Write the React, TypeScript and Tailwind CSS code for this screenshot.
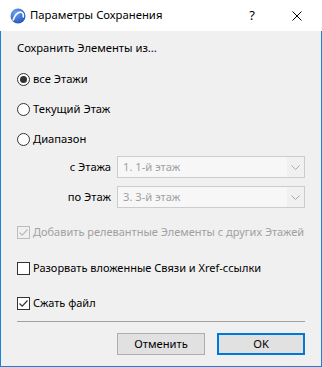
import React from "react";

const font = { fontFamily: '"Segoe UI", "Noto Sans", sans-serif' };

function Radio({ checked, label }: { checked?: boolean; label: string }) {
  return (
    <div className="flex h-5 items-center">
      <span className="flex h-[13px] w-[13px] items-center justify-center rounded-full border border-[#333333] bg-white">
        {checked && <span className="h-[7px] w-[7px] rounded-full bg-[#333333]" />}
      </span>
      <span className="ml-[3px] whitespace-nowrap text-[11.2px] text-black">{label}</span>
    </div>
  );
}

function Check({ checked, disabled, label }: { checked?: boolean; disabled?: boolean; label: string }) {
  const c = disabled ? "#bcbcbc" : "#333333";
  return (
    <div className="flex h-5 items-center">
      <span
        className={
          "flex h-[13px] w-[13px] shrink-0 items-center justify-center border " +
          (disabled ? "border-[#bcbcbc] bg-[#f0f0f0]" : "border-[#333333] bg-white")
        }
      >
        {checked && (
          <svg width="11" height="11" viewBox="0 0 11 11">
            <path d="M1.5 5.5 L4.2 8.2 L9.5 2.5" fill="none" stroke={c} strokeWidth="1.2" />
          </svg>
        )}
      </span>
      <span className={"ml-[3px] whitespace-nowrap text-[11px] " + (disabled ? "text-[#a0a0a0]" : "text-black")}>
        {label}
      </span>
    </div>
  );
}

function Combo({ label, value, first }: { label: string; value: string; first?: boolean }) {
  return (
    <div className={"flex h-[22px] items-center " + (first ? "mt-[7px]" : "mt-[8px]")}>
      <span className="w-[94px] whitespace-nowrap text-right text-[11.2px] text-black">{label}</span>
      <div className="ml-[6px] flex h-full flex-1 border border-[#cccccc] bg-[#f7f7f7]">
        <span className="flex flex-1 items-center pl-[5px] text-[11.2px] text-[#a0a0a0]">{value}</span>
        <span className="flex w-[17px] items-center justify-center bg-[#f0f0f0]">
          <svg width="9" height="5" viewBox="0 0 9 5">
            <path d="M0.5 0.5 L4.5 4.5 L8.5 0.5" fill="none" stroke="#a8a8a8" strokeWidth="1" />
          </svg>
        </span>
      </div>
    </div>
  );
}

export default function App() {
  return (
    <div className="h-[367px] w-[322px] bg-white" style={font}>
      <div className="flex h-[31px] items-center bg-white">
        <svg className="ml-[10px]" width="16" height="16" viewBox="0 0 16 16">
          <defs>
            <radialGradient id="g" cx="0.35" cy="0.3" r="0.8">
              <stop offset="0" stopColor="#6fa3f0" />
              <stop offset="1" stopColor="#1d4fb8" />
            </radialGradient>
          </defs>
          <circle cx="8" cy="8" r="7.5" fill="url(#g)" />
          <path d="M3 12.5 C4.5 7 8 3.8 11 4.2 C13 4.6 13.6 7 13.2 9.5" fill="none" stroke="#ffffff" strokeWidth="1.6" />
        </svg>
        <span className="ml-[4px] whitespace-nowrap text-[11.3px] text-black">Параметры Сохранения</span>
        <span className="ml-auto mr-[37px] text-[13px] text-black">?</span>
        <svg className="mr-[20px]" width="10" height="10" viewBox="0 0 10 10">
          <path d="M0.5 0.5 L9.5 9.5 M9.5 0.5 L0.5 9.5" stroke="#000" strokeWidth="1" />
        </svg>
      </div>
      <div className="flex h-[336px] flex-col border border-t-0 border-[#1883d7] bg-[#f0f0f0] px-4">
        <div className="mt-[7px] flex h-5 items-center whitespace-nowrap text-[11.2px] text-black">
          Сохранить Элементы из...
        </div>
        <div className="mt-[11px]">
          <Radio checked label="все Этажи" />
        </div>
        <div className="mt-[10px]">
          <Radio label="Текущий Этаж" />
        </div>
        <div className="mt-[10px]">
          <Radio label="Диапазон" />
        </div>
        <Combo first label="с Этажа" value="1. 1-й этаж" />
        <Combo label="по Этаж" value="3. 3-й этаж" />
        <div className="mt-[14px]">
          <Check checked disabled label="Добавить релевантные Элементы с других Этажей" />
        </div>
        <div className="mt-4">
          <Check label="Разорвать вложенные Связи и Xref-ссылки" />
        </div>
        <div className="mt-[15px]">
          <Check checked label="Сжать файл" />
        </div>
        <div className="mt-[8px] h-px bg-[#a0a0a0]" />
        <div className="mt-[11px] flex justify-end gap-3">
          <button className="h-[22px] w-[88px] border border-[#adadad] bg-[#e1e1e1] text-[11.2px] text-black">
            Отменить
          </button>
          <button className="h-[22px] w-[88px] border-2 border-[#0078d7] bg-[#e1e1e1] text-[11.2px] text-black">
            OK
          </button>
        </div>
      </div>
    </div>
  );
}
